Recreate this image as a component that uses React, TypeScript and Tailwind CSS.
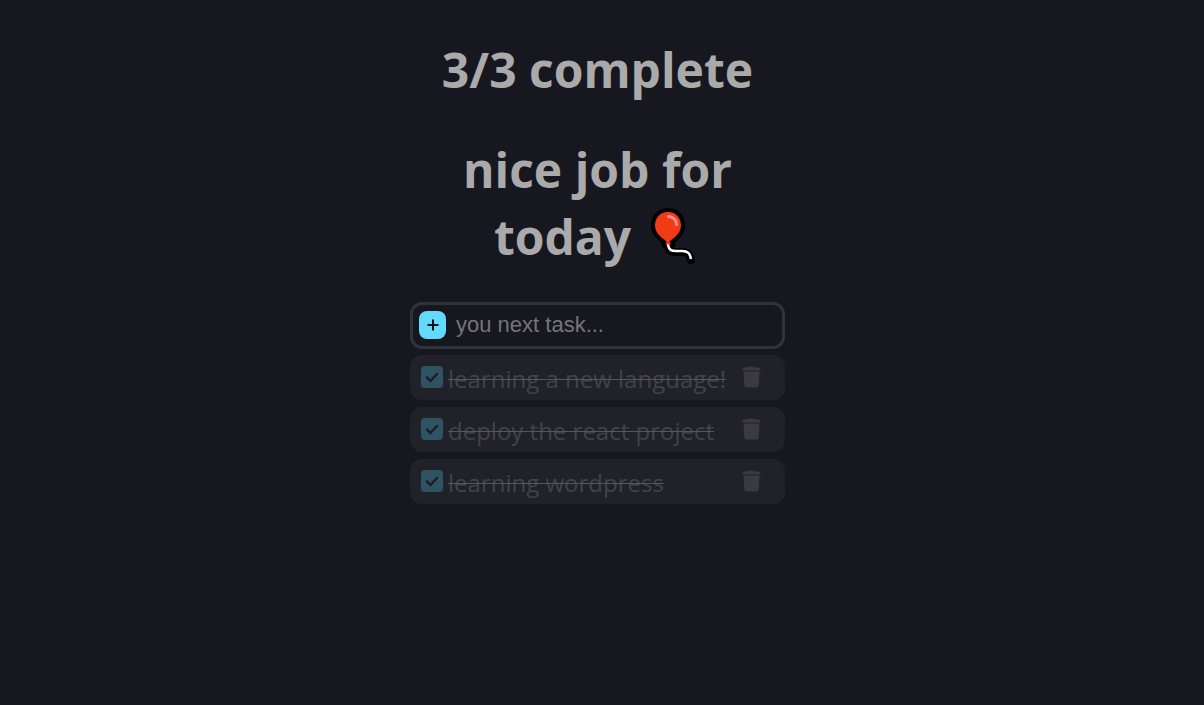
import { useState } from "react";

type Task = { id: number; name: string; done: boolean };

const initialTasks: Task[] = [
  { id: 1, name: "learning a new language!", done: true },
  { id: 2, name: "deploy the react project", done: true },
  { id: 3, name: "learning wordpress", done: true },
];

function Balloon() {
  return (
    <svg role="img" aria-label="balloon" viewBox="0 0 46 58" className="mr-1 ml-5 h-[58px] w-[46px]">
      <g fill="none" stroke="#000" strokeLinecap="round" strokeLinejoin="round">
        <path d="M17 37v2c1 5 4 5 8 5h6c6 0 8 2 9 8" strokeWidth="8" />
        <path
          d="M17 4C9 4 4 10 4 17.500C4 25 11 30 15.500 34L14.500 36.500H20L18.500 34C23 30 30 25 30 17.500C30 10 25 4 17 4Z"
          strokeWidth="8"
        />
      </g>
      <path d="M17 36v1c1 5.500 4 6 8 6h6c6 0 8 2.500 9 8" fill="none" stroke="#fff" strokeWidth="2.500" />
      <path
        d="M17 4C9 4 4 10 4 17.500C4 25 11 30 15.500 33.500L14.500 36.500H20L18.500 33.500C23 30 30 25 30 17.500C30 10 25 4 17 4Z"
        fill="#f23a17"
      />
      <path d="M17.500 8.500c4.500 0 8 3.500 8 8" fill="none" stroke="#f3958a" strokeWidth="3" strokeLinecap="round" />
    </svg>
  );
}

function TaskRow({ task, onToggle, onDelete }: { task: Task; onToggle: () => void; onDelete: () => void }) {
  const id = `task-${task.id}`;
  return (
    <li className="flex h-[45px] items-center rounded-xl bg-[#212129] pr-6 pb-0.5 pl-[11px]">
      <span className="grid shrink-0">
        <input
          id={id}
          type="checkbox"
          checked={task.done}
          onChange={onToggle}
          className="col-start-1 row-start-1 size-[22px] appearance-none rounded-sm border-2 border-[#2e5362] checked:bg-[#2e5362]"
        />
        {task.done && (
          <svg viewBox="0 0 22 22" aria-hidden="true" className="pointer-events-none col-start-1 row-start-1 size-[22px]">
            <path d="M6 11.500L9.500 15L16 8" fill="none" stroke="#1d1f28" strokeWidth="2.500" strokeLinecap="round" />
          </svg>
        )}
      </span>
      <label
        htmlFor={id}
        className={`ml-[5px] flex-1 pt-1 text-2xl whitespace-nowrap ${task.done ? "text-[#434347] line-through decoration-[#57575a] decoration-1" : "text-[#aaaaaa]"}`}
      >
        {task.name}
      </label>
      <button type="button" aria-label={`Delete ${task.name}`} onClick={onDelete} className="shrink-0">
        <svg viewBox="0 0 19 22" aria-hidden="true" className="h-[22px] w-[19px] fill-[#3a3a3f]">
          <path d="M6 1.500Q6.500 0.500 7.500 0.500H11.500Q12.500 0.500 13 1.500H17Q18.500 1.500 18.500 3Q18.500 4.500 17 4.500H2Q0.500 4.500 0.500 3Q0.500 1.500 2 1.500ZM1.500 5.500H17.500L16.700 19.500Q16.500 21.500 14.500 21.500H4.500Q2.500 21.500 2.300 19.500Z" />
        </svg>
      </button>
    </li>
  );
}

export default function App() {
  const [tasks, setTasks] = useState(initialTasks);
  const [name, setName] = useState("");
  const done = tasks.filter((task) => task.done).length;

  return (
    <div className="min-h-screen bg-[#17171f] pr-[9px] font-['Open_Sans','Noto_Sans',sans-serif] text-[#aaaaaa]">
      <main className="mx-auto w-full max-w-[375px] pt-9">
        <h1 className="text-center text-5xl leading-[67px] font-bold">
          {done}/{tasks.length} complete
        </h1>
        <h2 className="mt-[33px] text-center text-5xl leading-[67px] font-bold">
          <span className="block">nice job for</span>
          <span className="flex items-center justify-center">
            today <Balloon />
          </span>
        </h2>
        <form
          className="mt-8 flex h-[47px] items-center rounded-xl border-3 border-[#32323d] px-1.5 pb-0.5"
          onSubmit={(event) => {
            event.preventDefault();
            if (!name.trim()) return;
            setTasks([...tasks, { id: Date.now(), name, done: false }]);
            setName("");
          }}
        >
          <button type="submit" aria-label="Add task" className="grid h-7 w-[27px] shrink-0 place-items-center rounded-lg bg-[#61dafb]">
            <svg viewBox="0 0 12 12" aria-hidden="true" className="size-3">
              <path d="M6 0.500V11.500M0.500 6H11.500" stroke="#111118" strokeWidth="2" />
            </svg>
          </button>
          <input
            type="text"
            aria-label="Next task"
            placeholder="you next task..."
            value={name}
            onChange={(event) => setName(event.target.value)}
            className="ml-2.5 min-w-0 flex-1 bg-transparent font-['Liberation_Sans',Arial,sans-serif] text-[22px] outline-none placeholder:text-[#757575]"
          />
        </form>
        <ul className="mt-1.5 flex flex-col gap-[7px]">
          {tasks.map((task) => (
            <TaskRow
              key={task.id}
              task={task}
              onToggle={() => setTasks(tasks.map((t) => (t.id === task.id ? { ...t, done: !t.done } : t)))}
              onDelete={() => setTasks(tasks.filter((t) => t.id !== task.id))}
            />
          ))}
        </ul>
      </main>
    </div>
  );
}
